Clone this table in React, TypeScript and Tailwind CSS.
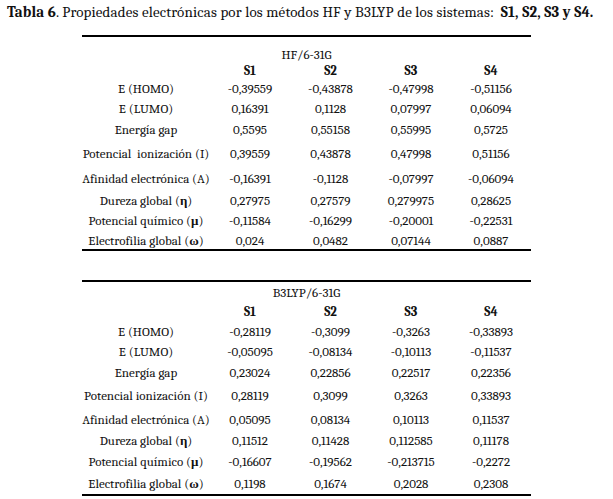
type Row = { label: string; vals: string[]; h: string };

const hfRows: Row[] = [
  { label: 'E (HOMO)', vals: ['-0,39559', '-0,43878', '-0,47998', '-0,51156'], h: 'h-[20px]' },
  { label: 'E (LUMO)', vals: ['0,16391', '0,1128', '0,07997', '0,06094'], h: 'h-[20px]' },
  { label: 'Energía gap', vals: ['0,5595', '0,55158', '0,55995', '0,5725'], h: 'h-[22px]' },
  { label: 'Potencial\u00a0 ionización (I)', vals: ['0,39559', '0,43878', '0,47998', '0,51156'], h: 'h-[27px]' },
  { label: 'Afinidad electrónica (A)', vals: ['-0,16391', '-0,1128', '-0,07997', '-0,06094'], h: 'h-[23px]' },
  { label: 'Dureza global (η)', vals: ['0,27975', '0,27579', '0,279975', '0,28625'], h: 'h-[20px]' },
  { label: 'Potencial químico (μ)', vals: ['-0,11584', '-0,16299', '-0,20001', '-0,22531'], h: 'h-[21px]' },
  { label: 'Electrofilia global (ω)', vals: ['0,024', '0,0482', '0,07144', '0,0887'], h: 'h-[18px]' },
];

const b3Rows: Row[] = [
  { label: 'E (HOMO)', vals: ['-0,28119', '-0,3099', '-0,3263', '-0,33893'], h: 'h-[20px]' },
  { label: 'E (LUMO)', vals: ['-0,05095', '-0,08134', '-0,10113', '-0,11537'], h: 'h-[20px]' },
  { label: 'Energía gap', vals: ['0,23024', '0,22856', '0,22517', '0,22356'], h: 'h-[22px]' },
  { label: 'Potencial ionización (I)', vals: ['0,28119', '0,3099', '0,3263', '0,33893'], h: 'h-[25px]' },
  { label: 'Afinidad electrónica (A)', vals: ['0,05095', '0,08134', '0,10113', '0,11537'], h: 'h-[22px]' },
  { label: 'Dureza global (η)', vals: ['0,11512', '0,11428', '0,112585', '0,11178'], h: 'h-[21px]' },
  { label: 'Potencial químico (μ)', vals: ['-0,16607', '-0,19562', '-0,213715', '-0,2272'], h: 'h-[21px]' },
  { label: 'Electrofilia global (ω)', vals: ['0,1198', '0,1674', '0,2028', '0,2308'], h: 'h-[22px]' },
];

const cols = 'grid grid-cols-[128px_80px_81px_80px_80px] items-center text-center';

function Label({ text }: { text: string }) {
  // greek letter in parentheses looks heavier in the source
  const m = text.match(/^(.*\()([ημω])(\))$/);
  if (!m) return <span className="whitespace-pre">{text}</span>;
  return (
    <span className="whitespace-pre">
      {m[1]}
      <b>{m[2]}</b>
      {m[3]}
    </span>
  );
}

function Block({ method, rows, pre, methodH, headH }: { method: string; rows: Row[]; pre: string; methodH: string; headH: string }) {
  return (
    <div className="w-[449px] ml-[82px]">
      <div className="h-[2px] bg-black" />
      <div className={pre} />
      <div className={`${methodH} flex items-center justify-center`}>{method}</div>
      <div className={`${cols} ${headH} font-bold`}>
        <div />
        <div>S1</div>
        <div>S2</div>
        <div>S3</div>
        <div>S4</div>
      </div>
      {rows.map(r => (
        <div key={r.label} className={`${cols} ${r.h}`}>
          <div><Label text={r.label} /></div>
          {r.vals.map((v, i) => (
            <div key={i}>{v}</div>
          ))}
        </div>
      ))}
      <div className="h-[2px] bg-black" />
    </div>
  );
}

export default function App() {
  return (
    <div className="w-[613px] h-[499px] bg-white text-[#111] text-[13px] leading-none overflow-hidden font-serif">
      <div className="pt-[5px] pl-[7px] text-[15px] tracking-[0.15px] h-[35px] whitespace-pre">
        <b>Tabla 6</b>. Propiedades electrónicas por los métodos HF y B3LYP de los sistemas:{'  '}
        <b>S1, S2, S3 y S4.</b>
      </div>
      <Block method="HF/6-31G" rows={hfRows} pre="h-[9px]" methodH="h-[16px]" headH="h-[16px]" />
      <div className="h-[29px]" />
      <Block method="B3LYP/6-31G" rows={b3Rows} pre="h-0" methodH="h-[20px]" headH="h-[19px]" />
    </div>
  );
}
